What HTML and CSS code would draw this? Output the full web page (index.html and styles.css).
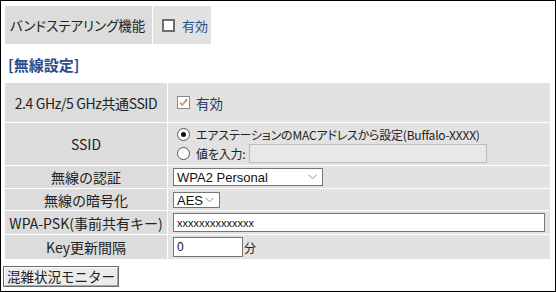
FILE: index.html
```html
<!DOCTYPE html>
<html lang="ja">
<head>
<meta charset="utf-8">
<title>無線設定</title>
<link rel="stylesheet" href="styles.css">
</head>
<body>
<div class="frame">
  <div class="band">
    <div class="band-label">バンドステアリング機能</div>
    <div class="band-value">
      <span class="check"></span>
      <span class="link-text">有効</span>
    </div>
  </div>

  <div class="section-title">[無線設定]</div>

  <div class="form-grid">
    <div class="label tight">2.4 GHz/5 GHz共通SSID</div>
    <div class="value">
      <span class="check checked">
        <svg width="13" height="13" viewBox="0 0 13 13">
          <defs>
            <linearGradient id="ck" x1="0" y1="1" x2="1" y2="0">
              <stop offset="0" stop-color="#e8802a"/>
              <stop offset="0.45" stop-color="#d99a66"/>
              <stop offset="1" stop-color="#2f68c0"/>
            </linearGradient>
          </defs>
          <polyline points="3,6.5 5.2,9 10,3.5" fill="none" stroke="url(#ck)" stroke-width="1.5"/>
        </svg>
      </span>
      <span class="link-text dark">有効</span>
    </div>

    <div class="label">SSID</div>
    <div class="value stack">
      <div class="radio-line">
        <span class="radio on"></span>
        <span class="opt-text">エアステーションのMACアドレスから設定(Buffalo-XXXX)</span>
      </div>
      <div class="radio-line">
        <span class="radio"></span>
        <span class="opt-text">値を入力:</span>
        <input class="text-in ssid-in" type="text" disabled>
      </div>
    </div>

    <div class="label">無線の認証</div>
    <div class="value">
      <span class="select-wrap auth">
        <select class="sel"><option>WPA2 Personal</option></select>
        <svg class="chev" width="9" height="6" viewBox="0 0 9 6"><polyline points="0.5,0.8 4.5,4.8 8.5,0.8" fill="none" stroke="#8a8a8a" stroke-width="1"/></svg>
      </span>
    </div>

    <div class="label">無線の暗号化</div>
    <div class="value">
      <span class="select-wrap enc">
        <select class="sel"><option>AES</option></select>
        <svg class="chev" width="9" height="6" viewBox="0 0 9 6"><polyline points="0.5,0.8 4.5,4.8 8.5,0.8" fill="none" stroke="#8a8a8a" stroke-width="1"/></svg>
      </span>
    </div>

    <div class="label">WPA-PSK(事前共有キー)</div>
    <div class="value">
      <input class="text-in psk-in" type="text" value="xxxxxxxxxxxxxx">
    </div>

    <div class="label">Key更新間隔</div>
    <div class="value">
      <input class="text-in key-in" type="text" value="0">
      <span class="unit">分</span>
    </div>
  </div>

  <button class="monitor-btn" type="button">混雑状況モニター</button>
</div>
</body>
</html>
```

FILE: styles.css
```css
html, body {
  margin: 0;
  padding: 0;
  background: #fff;
}

body {
  font-family: "Noto Sans CJK JP", "Noto Sans", sans-serif;
  font-size: 13px;
  color: #222;
}

.frame {
  width: 556px;
  height: 292px;
  box-sizing: border-box;
  border: 1px solid #000;
  padding: 5px 0 0 2px;
}

.band {
  display: grid;
  grid-template-columns: 147px 58px;
  column-gap: 1px;
  height: 38px;
  margin-left: 2px;
}

.band-label {
  background: #dcdcdc;
  display: flex;
  align-items: center;
  padding-left: 5px;
  font-size: 13.5px;
  font-feature-settings: "palt";
  white-space: nowrap;
}

.band-value {
  background: #e2e2e2;
  display: flex;
  align-items: center;
  padding-left: 9px;
}

.check {
  width: 13px;
  height: 13px;
  box-sizing: border-box;
  border: 2px solid #6e6e6e;
  background: #fff;
  display: inline-block;
  flex: none;
}

.check.checked {
  border: 1px solid #8a8a8a;
  position: relative;
}

.check.checked svg {
  position: absolute;
  left: -1px;
  top: -1px;
}

.link-text {
  color: #2b5089;
  margin-left: 7px;
  font-size: 13px;
}

.link-text.dark {
  color: #283a5c;
  font-size: 13.5px;
}

.section-title {
  color: #2b4c8c;
  font-weight: bold;
  font-size: 15px;
  line-height: 16px;
  margin: 13px 0 10px 5px;
}

.form-grid {
  display: grid;
  grid-template-columns: 162px 382px;
  grid-template-rows: 39px 42px 22px 21px 23px 24px;
  gap: 1px;
  margin-left: 2px;
}

.label {
  background: #dcdcdc;
  display: flex;
  align-items: center;
  justify-content: center;
  white-space: nowrap;
  font-size: 14px;
}

.label.tight {
  letter-spacing: -0.4px;
}

.value {
  background: #e2e2e2;
  display: flex;
  align-items: center;
  padding-left: 5px;
}

.value > .check {
  margin-left: 4px;
}

.value > .check + .link-text {
  margin-left: 6px;
}

.stack {
  flex-direction: column;
  align-items: flex-start;
  justify-content: center;
}

.radio-line {
  display: flex;
  align-items: center;
  height: 18px;
}

.radio-line + .radio-line {
  height: 20px;
}

.radio {
  width: 13px;
  height: 13px;
  box-sizing: border-box;
  border: 1px solid #555;
  border-radius: 50%;
  background: #fff;
  margin-left: 4px;
  margin-right: 6px;
  position: relative;
  flex: none;
}

.radio.on::after {
  content: "";
  position: absolute;
  left: 3px;
  top: 3px;
  width: 5px;
  height: 5px;
  border-radius: 50%;
  background: #111;
}

.opt-text {
  font-size: 12px;
  letter-spacing: -0.2px;
  font-feature-settings: "palt";
  white-space: nowrap;
}

.text-in {
  box-sizing: border-box;
  border: 1px solid #767676;
  background: #fff;
  font-family: "Liberation Sans", "Noto Sans", sans-serif;
  font-size: 12px;
  color: #111;
  padding: 0 3px;
  margin: 0;
  outline: none;
}

.ssid-in {
  width: 238px;
  height: 19px;
  margin-left: 4px;
  background: #e8e8e8;
  border-color: #bcbcbc;
}

.psk-in {
  width: 372px;
  height: 19px;
  font-size: 11px;
}

.key-in {
  width: 70px;
  height: 20px;
}

.unit {
  margin-left: 1px;
  font-size: 12px;
}

.select-wrap {
  position: relative;
  display: inline-block;
  line-height: 0;
}

.sel {
  appearance: none;
  -webkit-appearance: none;
  box-sizing: border-box;
  border: 1px solid #767676;
  border-radius: 0;
  background: #fff;
  font-family: "Liberation Sans", "Noto Sans", sans-serif;
  font-size: 13px;
  color: #111;
  padding: 0 0 0 3px;
  margin: 0;
  outline: none;
}

.auth .sel {
  width: 150px;
  height: 18px;
}

.enc .sel {
  width: 47px;
  height: 16px;
}

.chev {
  position: absolute;
  right: 6px;
  top: 50%;
  margin-top: -3px;
  pointer-events: none;
}

.monitor-btn {
  display: block;
  margin: 7px 0 0 0;
  width: 116px;
  height: 21px;
  padding: 0;
  box-sizing: border-box;
  border: 1px solid #6b6b6b;
  background: #ececec;
  box-shadow: inset 1px 1px #fff, inset -1px -1px #a8a8a8;
  font-family: "Noto Sans CJK JP", sans-serif;
  font-size: 13.5px;
  color: #222;
  line-height: 17px;
}
```
